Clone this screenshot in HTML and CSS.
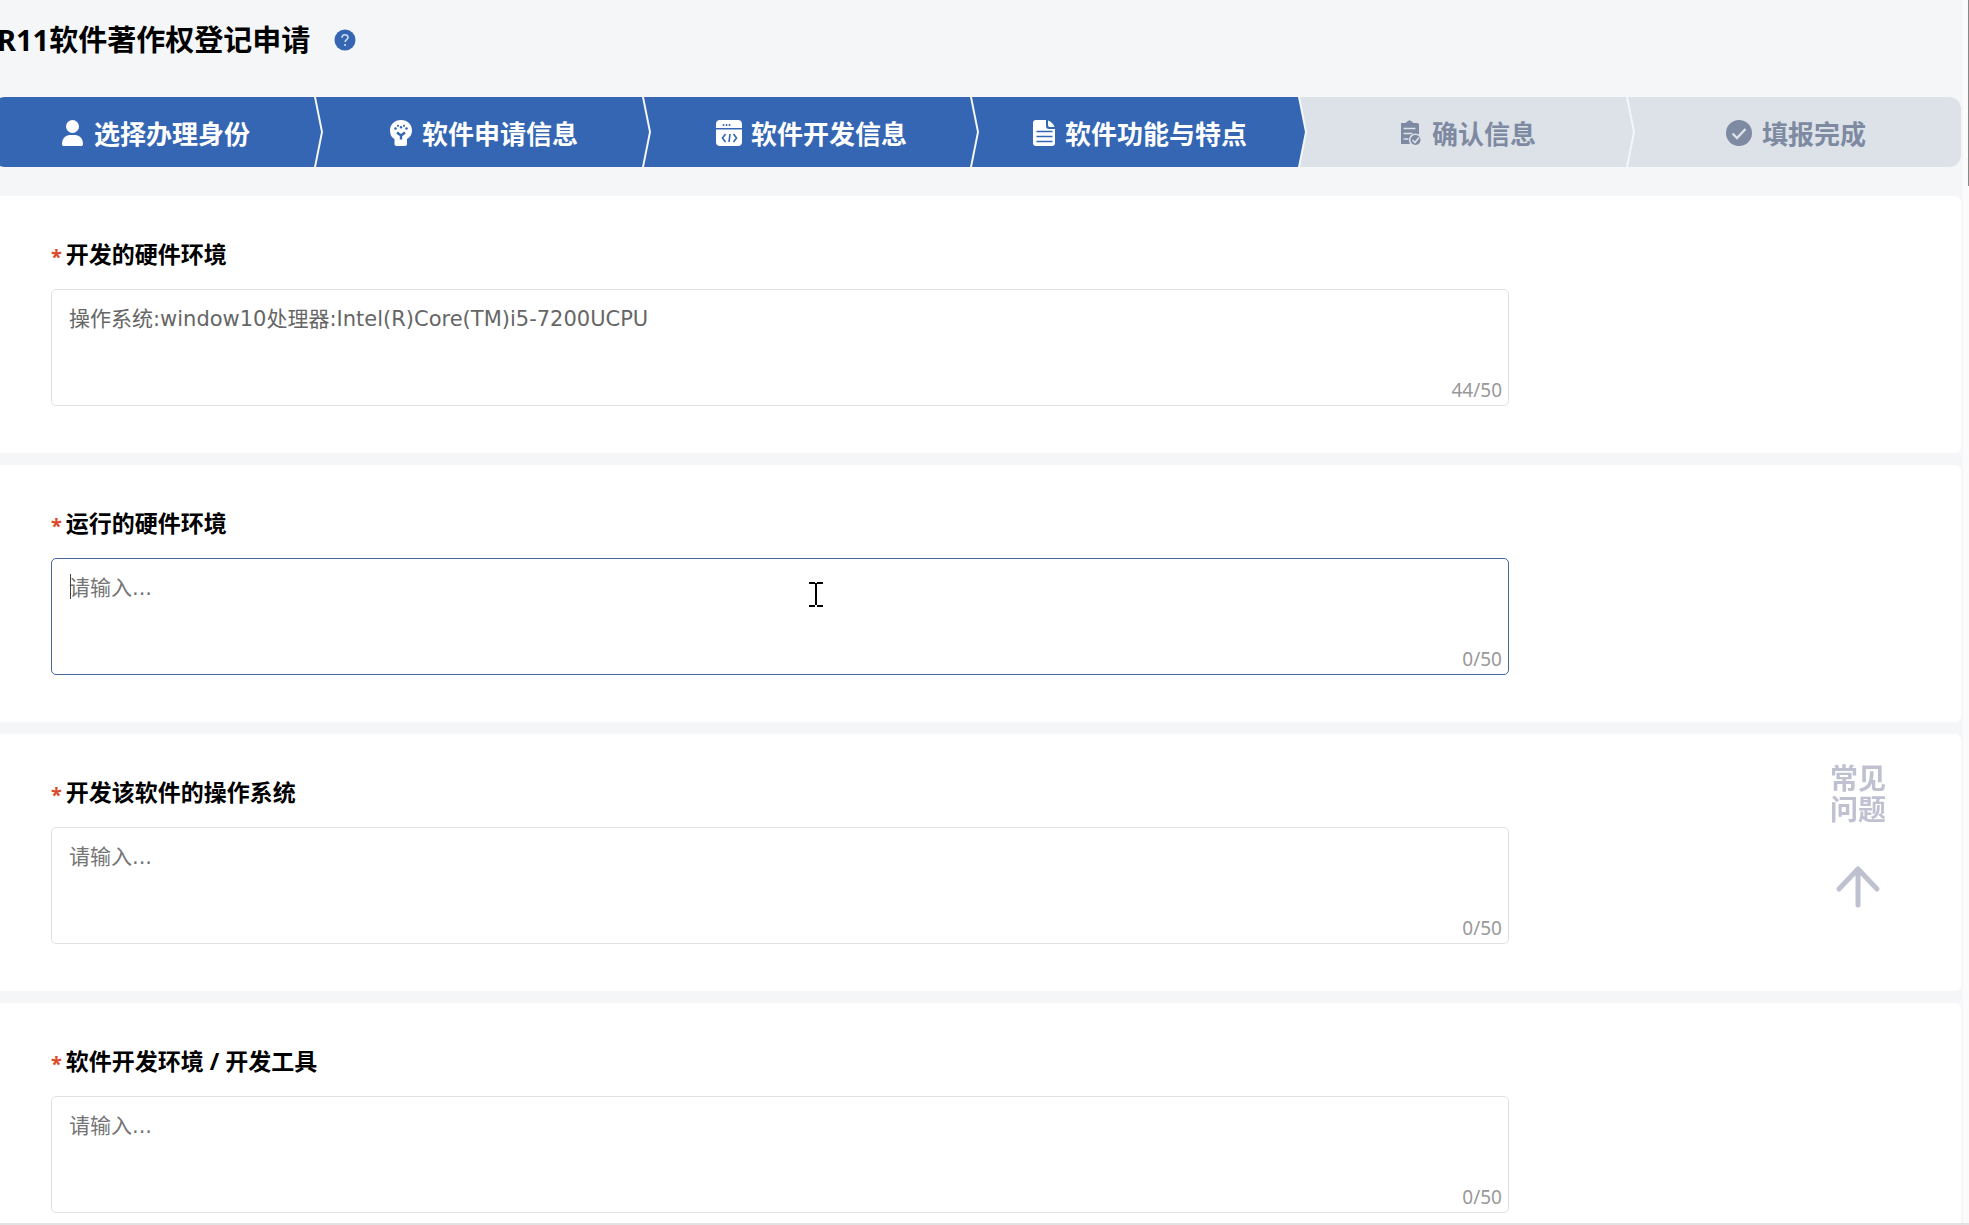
FILE: index.html
```html
<!DOCTYPE html>
<html lang="zh-CN">
  <head>
    <meta charset="utf-8">
    <title>R11软件著作权登记申请</title>
    <link rel="stylesheet" href="styles.css">
  </head>
  <body>
    <div class="page">
      <header class="header">
        <h1 class="title">R11软件著作权登记申请</h1>
        <button type="button" class="help" aria-label="帮助">
          <svg viewBox="0 0 22 22" width="22" height="22">
            <circle cx="11" cy="11" r="10.5" fill="#3466b3"/>
            <path d="M8 8.8C8 6.8 9.300 5.800 11 5.800s3 1.100 3 2.700c0 2-2.900 2.200-2.900 4.600" fill="none" stroke="#cfdcf0" stroke-width="1.600"/>
            <circle cx="11.100" cy="16" r="1.100" fill="#cfdcf0"/>
          </svg>
        </button>
      </header>

      <ol class="steps">
        <li class="step done">
          <svg viewBox="0 0 24 28" width="24" height="28" fill="currentColor">
            <circle cx="11.500" cy="7.500" r="6.500"/>
            <path d="M1 25c0-5.500 3.500-9 8-9h5c4.500 0 8 3.500 8 9 0 1.500-.8 2-2 2H3c-1.200 0-2-.5-2-2z"/>
          </svg>
          选择办理身份
        </li>
        <li class="step done">
          <svg viewBox="0 0 24 28" width="24" height="28">
            <path d="M12 1C5.500 1 1 5.500 1 11.500c0 4.500 1.800 7 4.500 8.500v5c0 1.300.7 2 2 2h8.500c1.300 0 2-.7 2-2v-5c3-1.500 5-4.500 5-8.500C23 5.500 18.500 1 12 1z" fill="currentColor"/>
            <g class="cut">
              <circle cx="6.500" cy="9.500" r="1.300"/><circle cx="9" cy="6.800" r="1.100"/><circle cx="12" cy="8.200" r="1.200"/><circle cx="15" cy="6.800" r="1.100"/><circle cx="17.500" cy="9.500" r="1.300"/>
            </g>
            <path class="cut-line" d="M8 13.500l4 3 4-3M12 16v4.500"/>
          </svg>
          软件申请信息
        </li>
        <li class="step done">
          <svg viewBox="0 0 26 28" width="26" height="28">
            <path d="M4 1h18c2.500 0 4 1.500 4 4v4H0V5c0-2.500 1.500-4 4-4zM0 10.500h26V23c0 2.500-1.500 4-4 4H4c-2.500 0-4-1.500-4-4z" fill="currentColor"/>
            <g class="cut"><circle cx="7.500" cy="6" r="1"/><circle cx="10.500" cy="6" r="1"/><circle cx="13.500" cy="6" r="1"/></g>
            <path class="cut-line thin" d="M9.500 15l-3 4 3 4M17.500 15l3 4-3 4M14 15l-1 8"/>
          </svg>
          软件开发信息
        </li>
        <li class="step done">
          <svg viewBox="0 0 24 28" width="24" height="28">
            <path d="M4 1h10v6c0 2 1 3 3 3h6v14c0 2-1 3-3 3H4c-2 0-3-1-3-3V4c0-2 1-3 3-3zM16 1.500c3 1 5.500 3.500 6.500 6.500H18c-1.300 0-2-.7-2-2z" fill="currentColor"/>
            <path class="cut-line thin" d="M4.500 12.500h16M4.500 17.500h16M4.500 22.500h16"/>
          </svg>
          软件功能与特点
        </li>
        <li class="step">
          <svg viewBox="0 0 24 28" width="24" height="28">
            <path d="M2 4h5c.3-1.200 1-1.600 2-1.800l1.500-1.200L12 2.200c1 .2 1.700.6 2 1.800h4c1.200 0 2 .8 2 2v19H2z" fill="currentColor"/>
            <path class="cut-line thin" d="M4.500 9.500h12M4.500 14.500h9M4.500 20h5"/>
            <circle class="cut-line thin badge" cx="16.500" cy="21" r="5.800"/>
            <path class="cut-line thin" d="M13.500 21l2.500 2.500 4-5"/>
          </svg>
          确认信息
        </li>
        <li class="step">
          <svg viewBox="0 0 28 28" width="28" height="28">
            <circle cx="14" cy="14" r="13" fill="currentColor"/>
            <path class="cut-line" d="M7.500 14.500l4.500 4.500 8.500-9"/>
          </svg>
          填报完成
        </li>
      </ol>

      <form class="form">
        <section class="panel">
          <label class="label" for="dev-hardware"><span class="required">*</span>开发的硬件环境</label>
          <div class="field">
            <textarea class="input" id="dev-hardware">操作系统:window10处理器:Intel(R)Core(TM)i5-7200UCPU</textarea>
            <span class="count">44/50</span>
          </div>
        </section>
        <section class="panel">
          <label class="label" for="run-hardware"><span class="required">*</span>运行的硬件环境</label>
          <div class="field">
            <textarea class="input active" id="run-hardware" placeholder="请输入..."></textarea>
            <span class="caret"></span>
            <span class="count">0/50</span>
          </div>
        </section>
        <section class="panel">
          <label class="label" for="dev-os"><span class="required">*</span>开发该软件的操作系统</label>
          <div class="field">
            <textarea class="input" id="dev-os" placeholder="请输入..."></textarea>
            <span class="count">0/50</span>
          </div>
        </section>
        <section class="panel">
          <label class="label" for="dev-tools"><span class="required">*</span>软件开发环境 / 开发工具</label>
          <div class="field">
            <textarea class="input" id="dev-tools" placeholder="请输入..."></textarea>
            <span class="count">0/50</span>
          </div>
        </section>
      </form>
    </div>

    <aside class="side">
      <a class="faq" href="#">常见<br>问题</a>
      <a class="to-top" href="#" aria-label="返回顶部">
        <svg viewBox="0 0 48 44" width="48" height="44" fill="none" stroke="currentColor" stroke-width="5" stroke-linecap="round" stroke-linejoin="round">
          <path d="M24 40V4M5 24L24 4l19 20"/>
        </svg>
      </a>
    </aside>

    <svg class="pointer" viewBox="0 0 14 26" width="14" height="26" fill="none" stroke="#000" stroke-width="2">
      <path d="M0 2h6M8 2h6M7 2v22M0 25h6M8 25h6"/>
    </svg>
    <div class="scrollbar"><div class="thumb"></div></div>
    <div class="bottom-edge"></div>
  </body>
</html>
```
FILE: styles.css
```css
* {
  box-sizing: border-box;
}
body {
  margin: 0;
  height: 100vh;
  overflow: hidden;
  background-color: #f4f6f8;
  color: #000;
  font-family: "Noto Sans", "Noto Sans CJK SC", sans-serif;
}
.page {
  margin-left: -7px;
  padding-right: 8px;
}
.header {
  display: flex;
  align-items: center;
  gap: 24px;
  height: 80px;
  padding-left: 4px;
}
.title {
  margin: 0;
  font-size: 29px;
  line-height: 40px;
  font-weight: bold;
}
.help {
  display: flex;
  padding: 0;
  border: 0;
  background: none;
}

/* steps */
.steps {
  display: flex;
  margin: 17px 0 29px;
  padding: 0;
  list-style: none;
  border-radius: 12px;
  overflow: hidden;
}
.step {
  flex: 1;
  display: flex;
  align-items: center;
  justify-content: center;
  gap: 9px;
  height: 70px;
  margin-left: -5px;
  padding: 2px 0 0 2px;
  background-color: #dde2e9;
  color: #7d8aa1;
  font-size: 26px;
  font-weight: bold;
  clip-path: polygon(0 0, calc(100% - 7px) 0, 100% 50%, calc(100% - 7px) 100%, 0 100%, 7px 50%);
}
.step:first-child {
  clip-path: polygon(0 0, calc(100% - 7px) 0, 100% 50%, calc(100% - 7px) 100%, 0 100%);
}
.step:last-child {
  clip-path: polygon(0 0, 100% 0, 100% 100%, 0 100%, 7px 50%);
}
.step.done {
  background-color: #3466b3;
  color: #fff;
}
.cut {
  fill: #dde2e9;
}
.cut-line {
  fill: none;
  stroke: #dde2e9;
  stroke-width: 2.4;
}
.thin {
  stroke-width: 1.6;
}
.badge {
  fill: #7d8aa1;
}
.done .cut {
  fill: #3466b3;
}
.done .cut-line {
  stroke: #3466b3;
}

/* form */
.form {
  display: flex;
  flex-direction: column;
  gap: 12px;
}
.panel {
  height: 257px;
  padding: 40px 452px 0 58px;
  border-radius: 6px;
  background-color: #fff;
}
.label {
  display: flex;
  align-items: center;
  gap: 4px;
  height: 34px;
  margin-bottom: 19px;
  font-size: 23px;
  font-weight: bold;
}
.required {
  padding-top: 6px;
  color: #dc4a2c;
  font-size: 20px;
}
.field {
  position: relative;
}
.input {
  display: block;
  width: 100%;
  height: 117px;
  padding: 14px 17px;
  border: 1px solid #dfe1e4;
  border-radius: 5px;
  outline: 0;
  resize: none;
  background-color: #fff;
  color: #666;
  font-family: "DejaVu Sans", "Noto Sans CJK SC", sans-serif;
  font-size: 21px;
  line-height: 30px;
}
.input::placeholder {
  color: #757575;
}
.input.active {
  border-color: #48689c;
}
.caret {
  position: absolute;
  top: 16px;
  left: 19px;
  width: 1px;
  height: 25px;
  background-color: #444;
}
.count {
  position: absolute;
  right: 7px;
  bottom: 3px;
  color: #999;
  font-size: 19px;
  line-height: 26px;
}

/* floating links */
.side {
  position: fixed;
  top: 763px;
  right: 83px;
  display: flex;
  flex-direction: column;
  align-items: center;
  gap: 40px;
}
.side a {
  color: #bfc1d1;
  text-decoration: none;
}
.faq {
  font-size: 28px;
  line-height: 31px;
  font-weight: bold;
}
.to-top {
  display: flex;
}
.pointer {
  position: absolute;
  top: 581px;
  left: 809px;
}
.scrollbar {
  position: fixed;
  top: 0;
  right: 0;
  bottom: 0;
  width: 6px;
  background-color: #fbfbfb;
}
.thumb {
  width: 1px;
  height: 186px;
  margin-left: auto;
  background-color: #888;
}
.bottom-edge {
  position: fixed;
  left: 0;
  right: 0;
  bottom: 0;
  height: 2px;
  background-color: #e2e2e2;
}
```
